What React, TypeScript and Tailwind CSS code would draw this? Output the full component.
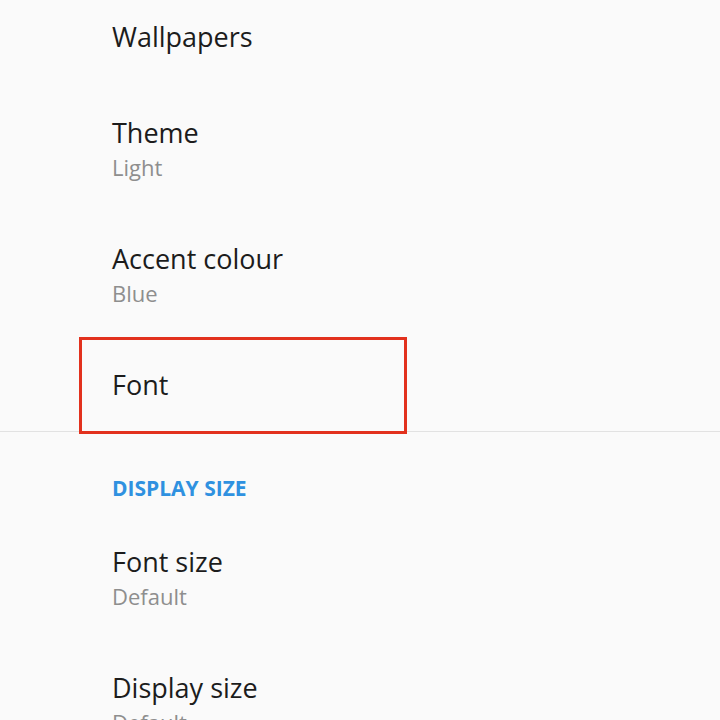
import React from 'react';

type Item = {
    title: string;
    summary?: string;
    highlighted?: boolean;
};

const styleItems: Item[] = [
    { title: 'Theme', summary: 'Light' },
    { title: 'Accent colour', summary: 'Blue' },
    { title: 'Font', highlighted: true },
];

const sizeItems: Item[] = [
    { title: 'Font size', summary: 'Default' },
    { title: 'Display size', summary: 'Default' },
];

function SettingRow({ item }: { item: Item }) {
    const height = item.summary ? 'h-[126px]' : 'h-[92px]';
    return (
        <div className={`${height} flex flex-col justify-center pl-[112px]`}>
            <div className="text-[27px] leading-[34px] text-[#1c1c1c]">{item.title}</div>
            {item.summary && (
                <div className="text-[22px] leading-[34px] text-[#8e8e8e]">{item.summary}</div>
            )}
        </div>
    );
}

function App() {
    return (
        <div
            className="w-[720px] h-[720px] overflow-hidden bg-[#fafafa]"
            style={{ fontFamily: '"Open Sans", "Noto Sans", sans-serif' }}
        >
            <div className="-mt-[9px]">
                <div className="h-[96px]">
                    <SettingRow item={{ title: 'Wallpapers' }} />
                </div>
                {styleItems.map((item) => (
                    <div key={item.title} className="relative">
                        <SettingRow item={item} />
                        {item.highlighted && (
                            <div className="absolute left-[79px] top-[-2px] w-[328px] h-[97px] border-[3px] border-[#e2311d]" />
                        )}
                    </div>
                ))}
                <div className="h-px bg-[#e2e2e2]" />

                {/* Display size section */}
                <div className="h-[84px] pl-[112px] pt-[42px]">
                    <div className="text-[21px] leading-[28px] font-bold text-[#2f91e0]">DISPLAY SIZE</div>
                </div>
                {sizeItems.map((item) => (
                    <SettingRow key={item.title} item={item} />
                ))}
            </div>
        </div>
    );
}

export default App;
